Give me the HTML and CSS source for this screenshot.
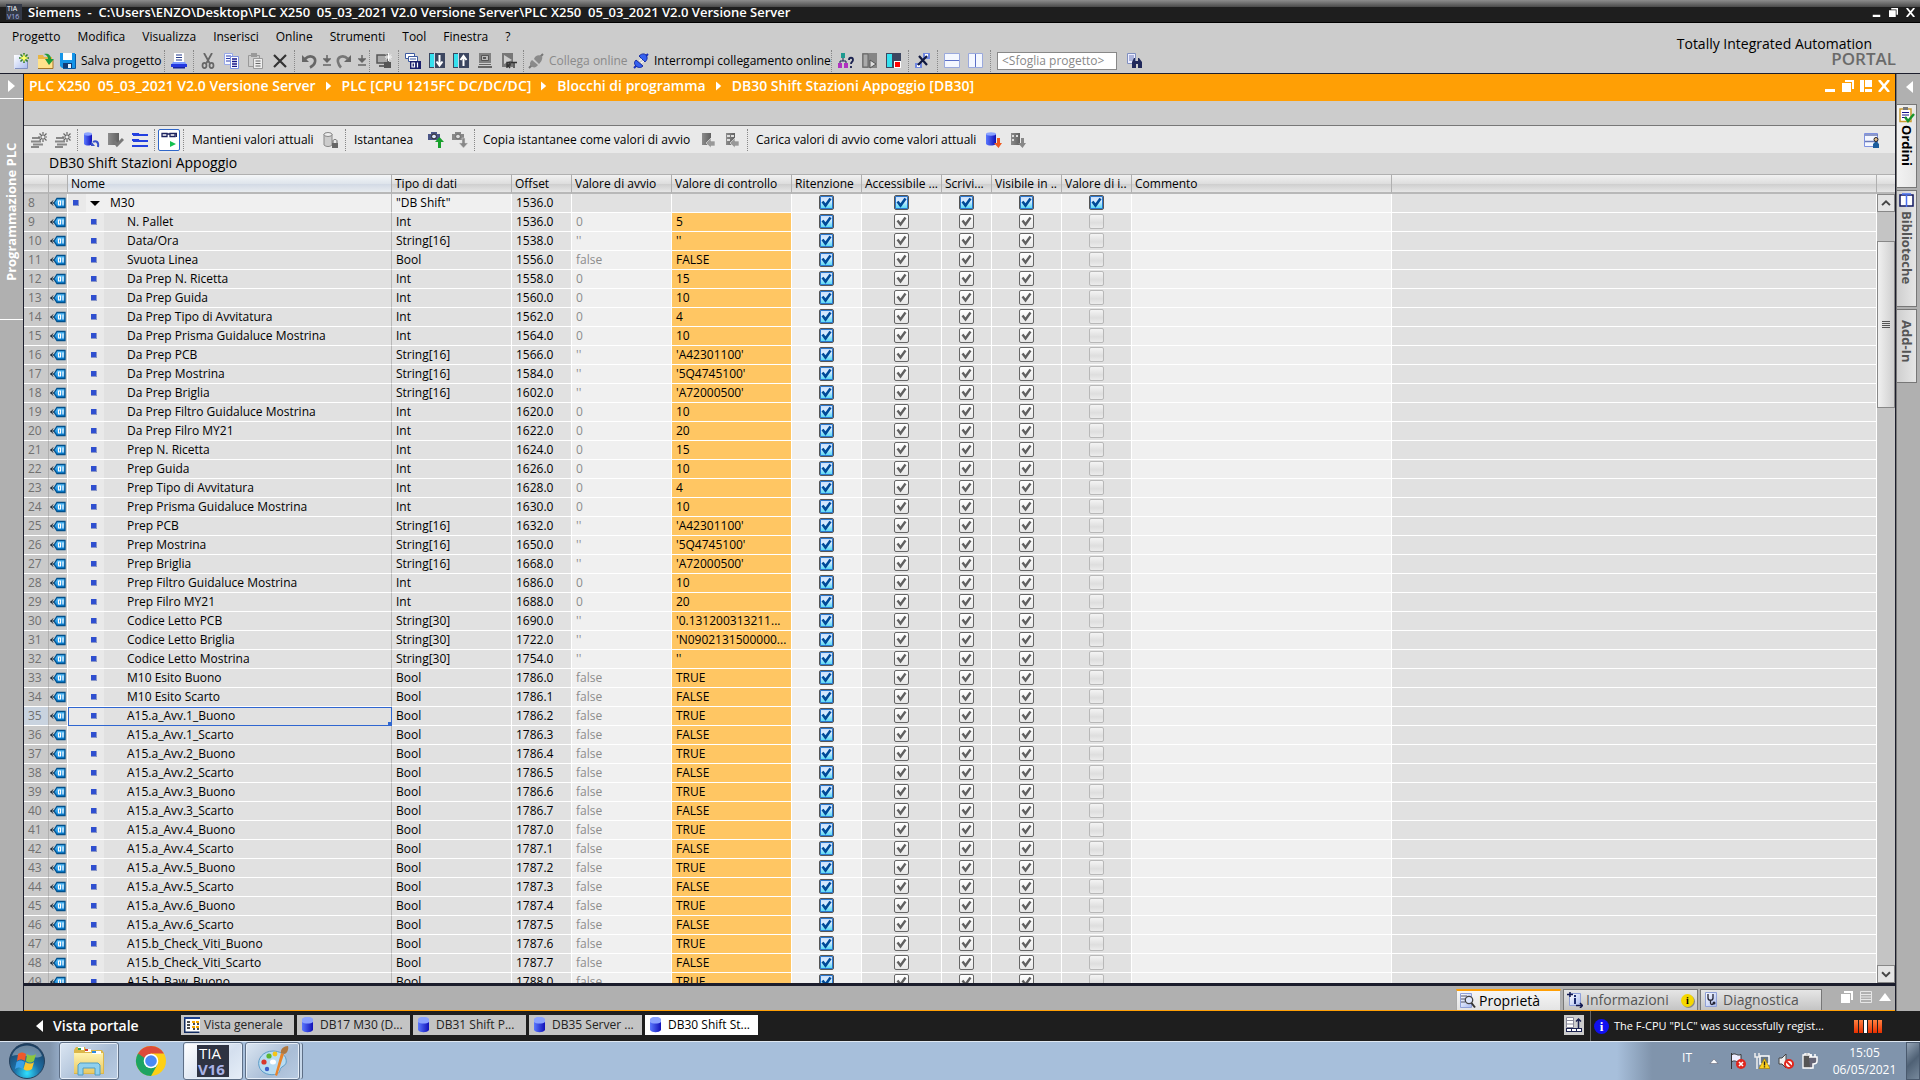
FILE: index.html
```html
<!DOCTYPE html>
<html lang="it">
<head>
<meta charset="utf-8">
<title>Siemens - PLC X250</title>
<link rel="stylesheet" href="styles.css">
</head>
<body>
<svg class="sprite" aria-hidden="true">
  <defs>
    <linearGradient id="gBlue" x1="0" x2="1" y1="0" y2="0"><stop offset="0" stop-color="#5a78ff"/><stop offset="1" stop-color="#1010b8"/></linearGradient>
    <linearGradient id="gGrey" x1="0" x2="1" y1="0" y2="0"><stop offset="0" stop-color="#8c8c8c"/><stop offset="1" stop-color="#606060"/></linearGradient>
    <linearGradient id="gPage" x1="0" x2="1" y1="0" y2="1"><stop offset="0" stop-color="#fff"/><stop offset="1" stop-color="#a9bbf0"/></linearGradient>
    <linearGradient id="gTag" x1="0" x2="0" y1="0" y2="1"><stop offset="0" stop-color="#5cc4ff"/><stop offset="1" stop-color="#0078d0"/></linearGradient>
    <linearGradient id="gFold" x1="0" x2="0" y1="0" y2="1"><stop offset="0" stop-color="#fff3b0"/><stop offset="1" stop-color="#e9c963"/></linearGradient>
    <radialGradient id="gOrb" cx=".5" cy=".85" r=".8"><stop offset="0" stop-color="#2fe0ff"/><stop offset=".45" stop-color="#1d6fa5"/><stop offset="1" stop-color="#1b3f63"/></radialGradient>
  </defs>
  <symbol id="new" viewBox="0 0 16 16"><path d="M0 2h9l4 4v10H0z" fill="url(#gPage)"/><path d="M1 15.5h12.5V7" stroke="#8090c0" fill="none"/><path d="M10 0v10M5 5h10M6.500 1.500l7 7M13.500 1.500l-7 7" stroke="#2d7a2d" stroke-width="1.500"/><path d="M10 1.500v7M6.500 5h7" stroke="#ff5" stroke-width="1.300"/><circle cx="10" cy="5" r="2" fill="#ffff70"/></symbol>
  <symbol id="open" viewBox="0 0 16 16"><path d="M0 2h5l1 2h8v11H0z" fill="#e8b544"/><path d="M0 15V6h15v9z" fill="#ffe28a"/><path d="M0 15.500h15V7" stroke="#a5762a" fill="none"/><path d="M6 1c4-1 7 1 7 5h3l-5 6-4-6h3c0-2-1-4-4-5z" fill="#1f9b3a"/></symbol>
  <symbol id="save" viewBox="0 0 16 16"><path d="M0 0h15v15H2l-2-2z" fill="#1595e8"/><path d="M3 0h9v7H3z" fill="#fff"/><path d="M3 10h9v5H3z" fill="#123c78"/><path d="M8 11h3v4H8z" fill="#e8f4ff"/><path d="M15.500 1v14.500H3" fill="none" stroke="#0a58a0"/></symbol>
  <symbol id="print" viewBox="0 0 16 16"><path d="M3 0h10v9H3z" fill="#fff"/><path d="M5 2h6M5 4.500h6M5 7h6" stroke="#223a8a" stroke-width="1.200"/><path d="M2 9h12l2 3H0z" fill="#7d9bff"/><path d="M0 11h16v3H0z" fill="#2438e0"/><path d="M2 14h12v1.500H2z" fill="#1422a0"/></symbol>
  <symbol id="cut" viewBox="0 0 16 16"><path d="M4 0l5.500 10M12 0L6.500 10" stroke="#666" stroke-width="1.800"/><ellipse cx="4.500" cy="12.500" rx="2" ry="2.600" fill="none" stroke="#666" stroke-width="1.700"/><ellipse cx="11.500" cy="12.500" rx="2" ry="2.600" fill="none" stroke="#666" stroke-width="1.700"/></symbol>
  <symbol id="copy" viewBox="0 0 16 16"><path d="M.5.5h8v11h-8z" fill="#f5f8ff" stroke="#98a8e8"/><path d="M2 3h5M2 5.500h5M2 8h5" stroke="#3040b0"/><path d="M6.500 3.500h8v12h-8z" fill="#fff" stroke="#7f92e0"/><path d="M8 6h5M8 8.500h5M8 11h5M8 13.300h5" stroke="#15158a" stroke-width="1.300"/></symbol>
  <symbol id="paste" viewBox="0 0 16 16"><path d="M.5 2.500h11v11H.5z" fill="#ccc" stroke="#999"/><path d="M3 0h6v4H3z" fill="#999"/><path d="M5.500 5.500h9v10h-9z" fill="#eee" stroke="#999"/><path d="M7.500 8h5M7.500 10.500h5M7.500 13h5" stroke="#666"/></symbol>
  <symbol id="del" viewBox="0 0 16 16"><path d="M2 2l12 12M14 2L2 14" stroke="#333" stroke-width="2.200"/></symbol>
  <symbol id="undo" viewBox="0 0 16 16"><path d="M1 2v7h7z" fill="#666"/><path d="M4 6c5-5 11-2 10 3-.5 2.500-2 4-5 5.500" fill="none" stroke="#666" stroke-width="2.600"/></symbol>
  <symbol id="redo" viewBox="0 0 16 16"><path d="M15 2v7H8z" fill="#666"/><path d="M12 6C7 1 1 4 2 9c.5 2.500 1 3.500 3 5.500" fill="none" stroke="#777" stroke-width="2.600"/></symbol>
  <symbol id="drop" viewBox="0 0 8 16"><path d="M4 2v4M1 6h6L4 9z" stroke="#666" stroke-width="1.500" fill="#666"/><path d="M0 12h8" stroke="#666" stroke-width="1.500"/></symbol>
  <symbol id="screen" viewBox="0 0 16 16"><path d="M1 2h11v8H1z" fill="#aaa" stroke="#555" stroke-width="1.500"/><path d="M8 9h7v6H8z" fill="#555"/><path d="M3 13h5" stroke="#666" stroke-width="2"/><path d="M12.500 0v8M9 4h7M10 1.500l5 5M15 1.500l-5 5" stroke="#fff"/></symbol>
  <symbol id="compile" viewBox="0 0 16 16"><path d="M.5.5h9v5h-9z" fill="#fff" stroke="#3d5aa0"/><path d="M3.500 3.500h9v5h-9z" fill="#fff" stroke="#3d5aa0"/><path d="M5 6h6" stroke="#3d5aa0"/><path d="M5 8h11v8H5z" fill="#1b1f6a"/><path d="M7 10h2.500v4H7zM12.500 9.500v5" fill="none" stroke="#fff" stroke-width="1.200"/></symbol>
  <symbol id="down" viewBox="0 0 16 16"><path d="M0 0h16v15H0z" fill="#3c4660"/><path d="M1 1h4v13H1z" fill="#35e0ee"/><path d="M5.500 0v15" stroke="#c8d8e8"/><path d="M10.500 2v9M7.500 8.500l3 4 3-4" stroke="#fff" stroke-width="2" fill="none"/></symbol>
  <symbol id="up" viewBox="0 0 16 16"><path d="M0 0h16v15H0z" fill="#3c4660"/><path d="M1 1h4v13H1z" fill="#35e0ee"/><path d="M5.500 0v15" stroke="#c8d8e8"/><path d="M10.500 13V4M7.500 7l3-4 3 4" stroke="#fff" stroke-width="2" fill="none"/></symbol>
  <symbol id="sim" viewBox="0 0 16 16"><path d="M2 0h12v10H2z" fill="#808080"/><path d="M4.500 2.500h7v5h-7z" fill="#b8b8b8" stroke="#555"/><path d="M6 4h3v2H6z" fill="#555"/><path d="M2 11h12v1H2zM1 13h14v2H1z" fill="#666"/></symbol>
  <symbol id="rt" viewBox="0 0 16 16"><path d="M1 0h11v14H1z" fill="#777"/><path d="M3 2l8 5-8 4z" fill="#ccc"/><path d="M6 15V9.500h3v2.500H6.500l2.500 3M10 9.500h6M13 9.500V15" stroke="#333" stroke-width="1.400" fill="none"/></symbol>
  <symbol id="plugoff" viewBox="0 0 16 16"><path d="M1 15l3-3M12 4l3-3" stroke="#777" stroke-width="2"/><path d="M4 7l6 5c-2 3-5 3-7 1s-1-4 1-6zM6 6c1-3 4-5 8-3 1 3-1 6-3 8z" fill="#8a8a8a"/></symbol>
  <symbol id="plugon" viewBox="0 0 16 16"><path d="M1 15l3-3M12 4l3-3" stroke="#1830c0" stroke-width="2"/><path d="M3 7l7 6c-2 2-5 2-7 0s-2-4 0-6zM6 3c2-2 5-3 7-1 2 3 1 5-1 7z" fill="#3560f0" stroke="#1228a0"/><path d="M6 8l3-2M8 10l3-2" stroke="#fff"/></symbol>
  <symbol id="diag" viewBox="0 0 16 16"><path d="M3 0h4v5H3z" fill="#1e9a90"/><path d="M5 5v3M2 10V8h6v2" stroke="#1b2250" fill="none"/><path d="M0 10h4v5H0zM6 10h4v5H6z" fill="#b030c0"/><path d="M11 7c0-3 4-3 4 0 0 2-2 1.500-2 4M13 13v2" stroke="#1b2250" stroke-width="1.800" fill="none"/></symbol>
  <symbol id="startcpu" viewBox="0 0 16 16"><path d="M0 0h15v15H0z" fill="#858585"/><path d="M1 1h5v13H1z" fill="#aaa" stroke="#666"/><path d="M8 7l6 4-6 4z" fill="#ddd" stroke="#555"/></symbol>
  <symbol id="stopcpu" viewBox="0 0 16 16"><path d="M0 0h15v15H0z" fill="#3c4660"/><path d="M1 1h5v13H1z" fill="#35e0ee"/><path d="M8 8h7v7H8z" fill="#fff"/><path d="M9 9h5v5H9z" fill="#f00"/></symbol>
  <symbol id="xref" viewBox="0 0 16 16"><path d="M8 0h7v6H8zM0 10h7v5H0z" fill="#7088e0"/><path d="M10 1h3v3h-3zM2 12h3v2H2z" fill="#fff"/><path d="M4 3l8 9M12 3l-9 9" stroke="#101840" stroke-width="2.200"/></symbol>
  <symbol id="splith" viewBox="0 0 16 16"><path d="M.5.5h15v14H.5z" fill="#f4f7ff" stroke="#9aa9dd"/><path d="M1 7.500h14" stroke="#5c70c8"/></symbol>
  <symbol id="splitv" viewBox="0 0 16 16"><path d="M.5.5h14v14H.5z" fill="#f4f7ff" stroke="#9aa9dd"/><path d="M7.500 1v13" stroke="#5c70c8"/></symbol>
  <symbol id="find" viewBox="0 0 16 16"><path d="M.5.5h8v10h-8z" fill="#eef" stroke="#8090c0"/><path d="M2 3h5M2 5h5M2 7h5" stroke="#6a7ab8"/><path d="M5 15V9l2-4h1v3h3V5h1l3 4v6h-4v-4H9v4z" fill="#20285a"/></symbol>
  <symbol id="rowadd" viewBox="0 0 16 16"><path d="M1 6h8M0 9.500h10M2 12.500h10M0 15h8" stroke="#888" stroke-width="2"/><path d="M12 0v10M7 5h9M8.500 1.500l7 7M15.500 1.500l-7 7" stroke="#666" stroke-width="1.200"/><circle cx="12" cy="5" r="1.500" fill="#eee"/></symbol>
  <symbol id="dbundo" viewBox="0 0 16 16"><path d="M0 2v10c2 2 6 2 8 0V2z" fill="url(#gBlue)"/><ellipse cx="4" cy="2" rx="4" ry="1.700" fill="#8ba3ff"/><path d="M7 9v5h4z" fill="#3850c8"/><path d="M9 10c3-2 6 0 5 5" stroke="#3850c8" stroke-width="2" fill="none"/></symbol>
  <symbol id="dbok" viewBox="0 0 16 16"><path d="M0 1h11v12H0z" fill="url(#gGrey)"/><path d="M6 9l3 4 6-6" stroke="#777" stroke-width="3" fill="none"/></symbol>
  <symbol id="expand" viewBox="0 0 16 16"><path d="M0 2h6v1h10M0 8h6v1h10M0 14h16M1 3h4M1 9h4" stroke="#2340e0" stroke-width="2.200" fill="none"/></symbol>
  <symbol id="glasses" viewBox="0 0 16 16"><path d="M1 1.500h5v3H1zM9 1.500h5v3H9zM6 2h3M14 1.500h1.500V5" fill="none" stroke="#1c2260" stroke-width="1.300"/><path d="M9 9l6 3-6 3z" fill="#15c050"/></symbol>
  <symbol id="dblock" viewBox="0 0 16 16"><path d="M1 2v11c2 2 6 2 8 0V2z" fill="#ccc" stroke="#888"/><ellipse cx="5" cy="2.500" rx="4" ry="2" fill="#eee" stroke="#888"/><path d="M10 11V9c0-2 4-2 4 0v2" fill="none" stroke="#666"/><path d="M9 11h6v5H9z" fill="#666"/></symbol>
  <symbol id="camup" viewBox="0 0 16 16"><path d="M0 2h3V0h6v2h3v6H0z" fill="#4a5586"/><circle cx="6" cy="4.500" r="2.400" fill="#dfe6ff" stroke="#222"/><path d="M11.500 5l4.500 5h-3v6h-3v-6H7z" fill="#18a02c"/></symbol>
  <symbol id="camdown" viewBox="0 0 16 16"><path d="M0 2h3V0h6v2h3v6H0z" fill="#888"/><circle cx="6" cy="4.500" r="2.400" fill="#ddd" stroke="#666"/><path d="M10 6h3v5h3l-4.500 5L7 11h3z" fill="#888" stroke="#ddd" stroke-width=".5"/></symbol>
  <symbol id="dbleft" viewBox="0 0 16 16"><path d="M1 1h9v12H1z" fill="url(#gGrey)"/><path d="M5 11l5-5v3l4 0v5h-4v2z" fill="#999" stroke="#eee" stroke-width=".6"/></symbol>
  <symbol id="dbleft2" viewBox="0 0 16 16"><path d="M1 1h9v12H1z" fill="url(#gGrey)"/><path d="M2 3h3v2H2zM2 7h3v2H2zM6 3h3v2H6z" fill="#ddd"/><path d="M5 11l5-5v3l4 0v5h-4v2z" fill="#999" stroke="#eee" stroke-width=".6"/></symbol>
  <symbol id="dbdown" viewBox="0 0 16 16"><path d="M0 2v10c2 2 7 2 10 0V2z" fill="url(#gBlue)"/><ellipse cx="5" cy="2" rx="5" ry="1.700" fill="#8ba3ff"/><path d="M11 6h3v5h2l-3.500 5L8 11h3z" fill="#f05a20"/></symbol>
  <symbol id="dbdown2" viewBox="0 0 16 16"><path d="M1 1h9v12H1z" fill="url(#gGrey)"/><path d="M2 3h2v2H2zM2 7h2v2H2zM6 3h2v2H6z" fill="#ddd"/><path d="M11 6h3v5h2l-3.500 5L8 11h3z" fill="#888"/></symbol>
  <symbol id="layout" viewBox="0 0 16 16"><path d="M.5 1.500h13v13H.5z" fill="#f4f7ff" stroke="#7f92e0"/><path d="M1 3h13M1 9.500h13" stroke="#6a7ab8" stroke-width="1.500"/><circle cx="12" cy="7.500" r="2" fill="#e8c090" stroke="#222"/><path d="M9 16v-4l2-2h2l2 2v4z" fill="#1c5c9c"/></symbol>
  <symbol id="tag" viewBox="0 0 16 12"><path d="M4 6l3-4.500h8v9H7z" fill="url(#gTag)" stroke="#00508c" stroke-width="1.300"/><path d="M0 6h4M3 3.500L1 6l2 2.500" stroke="#123" fill="none"/><path d="M8.500 4h2v4h-2zM13 3.500v5" fill="#1090e0" stroke="#fff" stroke-width="1.200"/></symbol>
  <symbol id="cyl" viewBox="0 0 11 16"><path d="M0 2v11c2 3 9 3 11 0V2z" fill="url(#gBlue)"/><path d="M0 2c2-3 9-3 11 0v3c-2 2-9 2-11 0z" fill="#8ba3ff"/></symbol>
  <symbol id="list" viewBox="0 0 16 16"><path d="M0 0h16v16H0z" fill="#fff"/><path d="M.5.500v15h15" fill="none" stroke="#102a60" stroke-width="2"/><path d="M0 1h16" stroke="#1c3f8c" stroke-width="2"/><path d="M3 5h3M3 8h3M3 11h3M9 7h2M13 7h2M9 12h2M13 12h2" stroke="#111" stroke-width="1.500"/><path d="M8 4h3v2H8zM12 4h3v2h-3zM8 9h3v2H8zM12 9h3v2h-3z" fill="#f8a800"/></symbol>
  <symbol id="clip" viewBox="0 0 16 16"><path d="M1 2h11v12.500H1z" fill="#fff" stroke="#c79a30" stroke-width="1.500"/><path d="M4 0h5v3H4z" fill="#777"/><path d="M3 5.500h7M3 8h7M3 10.500h5" stroke="#15158a" stroke-width="1.200"/><path d="M6 10l3 4 6-7" stroke="#18942c" stroke-width="2.400" fill="none"/></symbol>
  <symbol id="book" viewBox="0 0 16 16"><path d="M1 2h13v11H1z" fill="#fff" stroke="#101860" stroke-width="1.500"/><path d="M3 1h9M7.500 2v12" stroke="#4a70f0" stroke-width="1.500"/></symbol>
  <symbol id="props" viewBox="0 0 16 16"><path d="M.5.500h11v14H.5z" fill="url(#gPage)" stroke="#8fa0d8"/><path d="M1 3h6M1 6h4M1 9h4" stroke="#556"/><circle cx="9" cy="7" r="3.700" fill="#dfe8ff" stroke="#444" stroke-width="1.300"/><path d="M11.500 10l3.500 4.500" stroke="#333" stroke-width="2"/></symbol>
  <symbol id="infotab" viewBox="0 0 16 16"><path d="M2.500 1.500h11v12h-11z" fill="url(#gPage)" stroke="#8fa0d8"/><path d="M0 2.500h6M3 0v5M9 13.500h7M13 11l2.500 2.500L13 16" stroke="#111850" stroke-width="1.500" fill="none"/><path d="M7 3h2v2H7zM7 6h2v6H7z" fill="#1a2a70"/></symbol>
  <symbol id="diagtab" viewBox="0 0 16 16"><path d="M1.500.5h11v14h-11z" fill="url(#gPage)" stroke="#8fa0d8"/><path d="M4 2v4c0 3 5 3 5 0V2M6.500 8v3c0 2 3 2 3 0" stroke="#223" stroke-width="1.300" fill="none"/><circle cx="10" cy="11" r="1.500" fill="#223"/></symbol>
  <symbol id="stack" viewBox="0 0 12 12"><path d="M3 0h9v9h-2V2H3z" fill="currentColor"/><path d="M0 3h9v9H0z" fill="currentColor"/></symbol>
  <symbol id="pane" viewBox="0 0 12 12"><path d="M0 0h4v12H0zM5 0h7v7H5zM5 9h7v3H5z" fill="currentColor"/></symbol>
  <symbol id="min" viewBox="0 0 12 12"><path d="M1 9h10v3H1z" fill="currentColor"/></symbol>
  <symbol id="cross" viewBox="0 0 12 12"><path d="M1 0l10 12M11 0L1 12" stroke="currentColor" stroke-width="2.500"/></symbol>
  <symbol id="rows" viewBox="0 0 12 12"><path d="M.5.5h11v11H.5zM0 3.500h12M0 6h12M0 8.500h12" stroke="#e6e6e6" fill="none"/></symbol>
  <symbol id="right" viewBox="0 0 8 12"><path d="M0 0l7 6-7 6z" fill="currentColor"/></symbol>
  <symbol id="left" viewBox="0 0 8 12"><path d="M8 0L1 6l7 6z" fill="currentColor"/></symbol>
  <symbol id="tri" viewBox="0 0 12 8"><path d="M6 0l6 8H0z" fill="currentColor"/></symbol>
</svg>

<header class="titlebar">
  <svg class="applogo" viewBox="0 0 16 16"><rect width="16" height="16" fill="#333947"/><text x="1" y="7" font-size="7" fill="#fff">TIA</text><text x="1" y="15" font-size="7" fill="#a9b2e6">V16</text></svg>
  <h1>Siemens&nbsp; -&nbsp; C:\Users\ENZO\Desktop\PLC X250&nbsp; 05_03_2021 V2.0 Versione Server\PLC X250&nbsp; 05_03_2021 V2.0 Versione Server</h1>
  <div class="winctl">
    <button aria-label="Riduci"><svg><use href="#min"/></svg></button>
    <button aria-label="Ripristina"><svg><use href="#stack"/></svg></button>
    <button aria-label="Chiudi"><svg><use href="#cross"/></svg></button>
  </div>
</header>

<div class="head">
  <div class="headleft">
    <nav class="menu">
      <a href="#">Progetto</a><a href="#">Modifica</a><a href="#">Visualizza</a><a href="#">Inserisci</a><a href="#">Online</a><a href="#">Strumenti</a><a href="#">Tool</a><a href="#">Finestra</a><a href="#">?</a>
    </nav>
    <div class="toolbar main">
      <div class="group first">
        <button aria-label="Nuovo"><svg><use href="#new"/></svg></button>
        <button aria-label="Apri"><svg><use href="#open"/></svg></button>
        <button class="labelled w-save"><svg><use href="#save"/></svg>Salva progetto</button>
      </div>
      <div class="group"><button aria-label="Stampa"><svg><use href="#print"/></svg></button></div>
      <div class="group">
        <button aria-label="Taglia"><svg><use href="#cut"/></svg></button>
        <button aria-label="Copia"><svg><use href="#copy"/></svg></button>
        <button aria-label="Incolla"><svg><use href="#paste"/></svg></button>
        <button aria-label="Elimina"><svg><use href="#del"/></svg></button>
      </div>
      <div class="group">
        <button aria-label="Annulla"><svg><use href="#undo"/></svg></button>
        <button class="slim" aria-label="Elenco annulla"><svg><use href="#drop"/></svg></button>
        <button aria-label="Ripeti"><svg><use href="#redo"/></svg></button>
        <button class="slim" aria-label="Elenco ripeti"><svg><use href="#drop"/></svg></button>
      </div>
      <div class="group"><button aria-label="Dispositivo"><svg><use href="#screen"/></svg></button></div>
      <div class="group">
        <button aria-label="Compila"><svg><use href="#compile"/></svg></button>
        <button aria-label="Carica nel dispositivo"><svg><use href="#down"/></svg></button>
        <button aria-label="Carica dal dispositivo"><svg><use href="#up"/></svg></button>
        <button aria-label="Simulazione"><svg><use href="#sim"/></svg></button>
        <button aria-label="Runtime"><svg><use href="#rt"/></svg></button>
      </div>
      <div class="group">
        <button class="labelled w-online" disabled><svg><use href="#plugoff"/></svg>Collega online</button>
        <button class="labelled w-offline"><svg><use href="#plugon"/></svg>Interrompi collegamento online</button>
      </div>
      <div class="group">
        <button aria-label="Diagnostica online"><svg><use href="#diag"/></svg></button>
        <button aria-label="Avvia CPU"><svg><use href="#startcpu"/></svg></button>
        <button aria-label="Arresta CPU"><svg><use href="#stopcpu"/></svg></button>
      </div>
      <div class="group"><button aria-label="Riferimenti incrociati"><svg><use href="#xref"/></svg></button></div>
      <div class="group">
        <button aria-label="Dividi in orizzontale"><svg><use href="#splith"/></svg></button>
        <button aria-label="Dividi in verticale"><svg><use href="#splitv"/></svg></button>
      </div>
      <input class="search" type="text" placeholder="&lt;Sfoglia progetto&gt;" aria-label="Sfoglia progetto">
      <button aria-label="Cerca"><svg><use href="#find"/></svg></button>
    </div>
  </div>
  <div class="brand"><span>Totally Integrated Automation</span><strong>PORTAL</strong></div>
</div>

<div class="workspace">
  <aside class="leftbar">
    <button class="opener" aria-label="Espandi"><svg><use href="#right"/></svg></button>
    <div class="leftlabel"><span>Programmazione PLC</span></div>
  </aside>

  <main class="editor">
    <div class="crumbs">
      <a href="#">PLC X250&nbsp; 05_03_2021 V2.0 Versione Server</a><svg><use href="#right"/></svg>
      <a href="#">PLC [CPU 1215FC DC/DC/DC]</a><svg><use href="#right"/></svg>
      <a href="#">Blocchi di programma</a><svg><use href="#right"/></svg>
      <a href="#">DB30 Shift Stazioni Appoggio [DB30]</a>
      <div class="panectl">
        <button aria-label="Riduci"><svg><use href="#min"/></svg></button>
        <button aria-label="Sgancia"><svg><use href="#stack"/></svg></button>
        <button aria-label="Disponi"><svg><use href="#pane"/></svg></button>
        <button aria-label="Chiudi"><svg><use href="#cross"/></svg></button>
      </div>
    </div>
    <div class="spacer"></div>
    <div class="toolbar edit">
      <div class="group">
        <button aria-label="Inserisci riga"><svg><use href="#rowadd"/></svg></button>
        <button aria-label="Aggiungi riga"><svg><use href="#rowadd"/></svg></button>
      </div>
      <div class="group">
        <button aria-label="Resetta valori"><svg><use href="#dbundo"/></svg></button>
        <button aria-label="Aggiorna"><svg><use href="#dbok"/></svg></button>
        <button aria-label="Modo esteso"><svg><use href="#expand"/></svg></button>
      </div>
      <div class="group"><button class="pressed" aria-label="Controlla tutto"><svg><use href="#glasses"/></svg></button></div>
      <div class="group"><button class="caption w-keep">Mantieni valori attuali</button><button aria-label="Blocca"><svg><use href="#dblock"/></svg></button></div>
      <div class="group"><button class="caption w-snap">Istantanea</button><button aria-label="Acquisisci"><svg><use href="#camup"/></svg></button><button aria-label="Ripristina istantanea"><svg><use href="#camdown"/></svg></button></div>
      <div class="group"><button class="caption w-copy">Copia istantanee come valori di avvio</button><button aria-label="Copia tutto"><svg><use href="#dbleft"/></svg></button><button aria-label="Copia parziale"><svg><use href="#dbleft2"/></svg></button></div>
      <div class="group last"><button class="caption w-load">Carica valori di avvio come valori attuali</button><button aria-label="Carica tutto"><svg><use href="#dbdown"/></svg></button><button aria-label="Carica parziale"><svg><use href="#dbdown2"/></svg></button></div>
      <button class="layoutbtn" aria-label="Vista"><svg><use href="#layout"/></svg></button>
    </div>
    <h2>DB30 Shift Stazioni Appoggio</h2>

    <div class="gridwrap">
      <div class="gridview">
        <table>
          <colgroup><col class="c25"><col class="c19"><col class="c324"><col class="c120"><col class="c60"><col class="c100"><col class="c120"><col class="c70"><col class="c80"><col class="c50"><col class="c70"><col class="c70"><col class="c260"><col></colgroup>
          <thead><tr><th></th><th></th><th class="sorted">Nome</th><th>Tipo di dati</th><th>Offset</th><th>Valore di avvio</th><th>Valore di controllo</th><th>Ritenzione</th><th>Accessibile ...</th><th>Scrivi...</th><th>Visibile in ..</th><th>Valore di i..</th><th>Commento</th><th></th></tr></thead>
          <tbody id="rows-body"></tbody>
        </table>
      </div>
      <div class="scroll">
        <div class="scrollhead"></div>
        <button aria-label="Su"><svg viewBox="0 0 16 16"><path d="M3.500 10.500L8 6l4.500 4.500" fill="none" stroke="#444" stroke-width="2.200"/></svg></button>
        <div class="track"><div class="thumb"></div></div>
        <button aria-label="Giù"><svg viewBox="0 0 16 16"><path d="M3.500 6L8 10.500 12.500 6" fill="none" stroke="#444" stroke-width="2.200"/></svg></button>
      </div>
    </div>

    <div class="inspector">
      <button class="tab active w-props"><svg><use href="#props"/></svg>Proprietà</button>
      <button class="tab w-info"><svg><use href="#infotab"/></svg>Informazioni<i class="badge">i</i></button>
      <button class="tab w-diag"><svg><use href="#diagtab"/></svg>Diagnostica</button>
      <div class="inspctl">
        <button aria-label="Sgancia"><svg><use href="#stack"/></svg></button>
        <button aria-label="Elenco"><svg><use href="#rows"/></svg></button>
        <button aria-label="Espandi"><svg class="flat"><use href="#tri"/></svg></button>
      </div>
    </div>
  </main>

  <aside class="rightbar">
    <button class="opener" aria-label="Espandi"><svg><use href="#left"/></svg></button>
    <button class="side on h-ord"><svg><use href="#clip"/></svg><span>Ordini</span></button>
    <button class="side h-bib"><svg><use href="#book"/></svg><span>Biblioteche</span></button>
    <button class="side h-add"><span>Add-In</span></button>
  </aside>
</div>

<div class="portalbar">
  <button class="portal"><svg><use href="#left"/></svg>Vista portale</button>
  <div class="docs">
    <button><svg class="wide"><use href="#list"/></svg>Vista generale</button>
    <button><svg><use href="#cyl"/></svg>DB17 M30 (D...</button>
    <button><svg><use href="#cyl"/></svg>DB31 Shift P...</button>
    <button><svg><use href="#cyl"/></svg>DB35 Server ...</button>
    <button class="on"><svg><use href="#cyl"/></svg>DB30 Shift St...</button>
  </div>
  <div class="status">
    <svg class="stico" viewBox="0 0 20 20"><rect width="20" height="20" fill="#ccc"/><path d="M2.500 2.500h7v10h-7zM3 5.500h6M3 9h6" fill="#fff" stroke="#889"/><path d="M14.500 13V5M12 6.500L14.500 4 17 6.500" stroke="#1b2250" stroke-width="1.500" fill="none"/><path d="M2 13h16v4H2z" fill="#1b2250"/><path d="M3 15h4M8 15h4M13 15h4" stroke="#fff" stroke-width="2"/></svg>
    <div class="msg"><i class="info">i</i><span>The F-CPU "PLC" was successfully regist...</span></div>
    <div class="activity"><b></b><b></b><b class="lit"></b><b></b><b></b><b></b></div>
  </div>
</div>

<footer class="taskbar">
  <button class="start" aria-label="Start"><svg viewBox="0 0 38 38"><circle cx="19" cy="19" r="17.500" fill="url(#gOrb)" stroke="#25405c"/><path d="M4 14c4-14 26-14 30 0-8 5-20-4-30 0z" fill="#fff" opacity=".35"/><path d="M10 12c3-2 5-2 8 0l-1 7c-3-2-5-2-8 0z" fill="#f0592a"/><path d="M19 12c3 2 6 2 9 0l-2 7c-3 2-5 2-8 0z" fill="#8cc63e"/><path d="M8.500 20c3-2 5-2 8 0l-2 7c-3-2-5-2-7.500 0z" fill="#3aa0e8"/><path d="M17.500 20c3 2 6 2 8.500 0l-2 7c-3 2-6 2-8.500 0z" fill="#fcc52c"/></svg></button>
  <button class="task" aria-label="Esplora risorse"><svg viewBox="0 0 32 32"><path d="M1 5l2-3h9l1 3h16l2 3v21H1z" fill="#dcb74a"/><path d="M1 8h29v20H1z" fill="url(#gFold)"/><path d="M5 2h6v3H5z" fill="#fff"/><path d="M5 3h3v2H5z" fill="#2fa84f"/><path d="M12 4h6v3h-6z" fill="#fff"/><path d="M12 4h3v2h-3z" fill="#d83a2b"/><path d="M19 6h9v3h-9z" fill="#fff"/><path d="M19 6h4v2h-4z" fill="#2d8be0"/><path d="M5 30V20l2-2h18l2 2v10h-5v-7H10v7z" fill="#8fd0ee" stroke="#4e9cc4"/></svg></button>
  <button class="task plain" aria-label="Chrome"><svg viewBox="0 0 32 32"><circle cx="16" cy="16" r="15" fill="#fdd016"/><path d="M3 8.500A15 15 0 0 0 16 31l6.500-11.500L16 16z" fill="#1da462"/><path d="M3 8.500A15 15 0 0 1 29 8.500H16L9 16z" fill="#dd4b39"/><path d="M3 8.500L9.500 20l3-5z" fill="#1da462"/><circle cx="16" cy="16" r="7.300" fill="#fff"/><circle cx="16" cy="16" r="5.800" fill="#4a8af4"/></svg></button>
  <button class="task strong" aria-label="TIA Portal"><svg viewBox="0 0 32 32"><rect width="32" height="32" fill="#2e3342"/><text x="2" y="14" font-size="15" fill="#fff" font-weight="500">TIA</text><text x="1" y="30" font-size="15" font-weight="700" fill="#a9b2e6">V16</text></svg></button>
  <button class="task multi" aria-label="Paint"><svg viewBox="0 0 32 32"><path d="M16 6C6 6 0 14 2 21c2 8 12 10 18 8 4-2 2-5 5-7s5-3 4-8-7-8-13-8z" fill="#b8dcf2" stroke="#5c9cc8"/><circle cx="7" cy="17" r="2.600" fill="#d8362a"/><circle cx="12" cy="11" r="2.600" fill="#5cb531"/><circle cx="18" cy="9" r="2.400" fill="#f5c518"/><circle cx="10" cy="24" r="2.200" fill="#3a5cc8"/><ellipse cx="16" cy="17" rx="3" ry="2.500" fill="#fff"/><path d="M27 9L20 31l-2-1 6-22z" fill="#e8832a"/><path d="M24 8c-1-4 3-7 7-7 1 3-1 8-4 8z" fill="#b07840"/></svg></button>
  <div class="tray">
    <span class="lang">IT</span>
    <svg class="flat" viewBox="0 0 12 8"><path d="M2 6.500h8L6 2z" fill="#fff" stroke="#556" stroke-width=".5"/></svg>
    <svg viewBox="0 0 16 16"><path d="M1.500 0v16M2 1.500c4-2 5 2 9 0v7c-4 2-5-2-9 0" fill="#eef" stroke="#333"/><circle cx="11" cy="11" r="5" fill="#e0261c"/><path d="M9 9l4 4M13 9l-4 4" stroke="#fff" stroke-width="1.600"/></svg>
    <svg viewBox="0 0 16 16"><path d="M6 3h9v8H6z" fill="#678" stroke="#fff" stroke-width="1.500"/><path d="M1 0v4h4V0M3 4v12" stroke="#eee" stroke-width="1.500" fill="none"/><path d="M10.500 5.500L16 15.500H5z" fill="#ffd21e" stroke="#a07800" stroke-width=".6"/><path d="M10.500 8.500v4M10.500 13.300v1.200" stroke="#222" stroke-width="1.400"/></svg>
    <svg viewBox="0 0 16 16"><path d="M1 5h3l4-4v14l-4-4H1z" fill="#eee" stroke="#444"/><circle cx="11" cy="11" r="4" fill="#fff" stroke="#e0261c" stroke-width="2"/><path d="M8.500 8.500l5 5" stroke="#e0261c" stroke-width="1.800"/></svg>
    <svg viewBox="0 0 16 16"><path d="M1 2h8v13H1zM3 0h4v2H3z" fill="#555" stroke="#fff" stroke-width="1.300"/><path d="M9 1v3M13 1v3M7 4h8v4c0 3-3 3-4 3v4H8" stroke="#fff" stroke-width="1.500" fill="#667"/></svg>
    <div class="clock"><span>15:05</span><span>06/05/2021</span></div>
    <button class="desk" aria-label="Mostra desktop"></button>
  </div>
</footer>
<script src="rows.js"></script>
</body>
</html>
```
FILE: rows.js
```js
const S16 = 'String[16]', S30 = 'String[30]';
const data = [
  ['N. Pallet', 'Int', '1536.0', '5'], ['Data/Ora', S16, '1538.0', "''"], ['Svuota Linea', 'Bool', '1556.0', 'FALSE'],
  ['Da Prep N. Ricetta', 'Int', '1558.0', '15'], ['Da Prep Guida', 'Int', '1560.0', '10'], ['Da Prep Tipo di Avvitatura', 'Int', '1562.0', '4'],
  ['Da Prep Prisma Guidaluce Mostrina', 'Int', '1564.0', '10'], ['Da Prep PCB', S16, '1566.0', "'A42301100'"],
  ['Da Prep Mostrina', S16, '1584.0', "'5Q4745100'"], ['Da Prep Briglia', S16, '1602.0', "'A72000500'"],
  ['Da Prep Filtro Guidaluce Mostrina', 'Int', '1620.0', '10'], ['Da Prep Filro MY21', 'Int', '1622.0', '20'],
  ['Prep N. Ricetta', 'Int', '1624.0', '15'], ['Prep Guida', 'Int', '1626.0', '10'], ['Prep Tipo di Avvitatura', 'Int', '1628.0', '4'],
  ['Prep Prisma Guidaluce Mostrina', 'Int', '1630.0', '10'], ['Prep PCB', S16, '1632.0', "'A42301100'"],
  ['Prep Mostrina', S16, '1650.0', "'5Q4745100'"], ['Prep Briglia', S16, '1668.0', "'A72000500'"],
  ['Prep Filtro Guidaluce Mostrina', 'Int', '1686.0', '10'], ['Prep Filro MY21', 'Int', '1688.0', '20'],
  ['Codice Letto PCB', S30, '1690.0', "'0.131200313211..."], ['Codice Letto Briglia', S30, '1722.0', "'N0902131500000..."],
  ['Codice Letto Mostrina', S30, '1754.0', "''"], ['M10 Esito Buono', 'Bool', '1786.0', 'TRUE'], ['M10 Esito Scarto', 'Bool', '1786.1', 'FALSE'],
];
const bits = [];
for (let n = 1; n <= 6; n++) bits.push(`A15.a_Avv.${n}_Buono`, `A15.a_Avv.${n}_Scarto`);
bits.push('A15.b_Check_Viti_Buono', 'A15.b_Check_Viti_Scarto', 'A15.b_Baw_Buono');
bits.forEach((name, i) => {
  const bit = i + 2;
  data.push([name, 'Bool', `${1786 + Math.floor(bit / 8)}.${bit % 8}`, i % 2 ? 'FALSE' : 'TRUE']);
});

const start = { Int: '0', Bool: 'false' };
const columns = ['Ritenzione', 'Accessibile', 'Scrivibile', 'Visibile', 'Valore di impostazione'];
const box = (name, col, parent) => {
  const on = parent || col < 4;
  const locked = !parent && col > 0;
  return `<td class="${locked ? '' : 'light'} tick"><input type="checkbox" aria-label="${name} ${columns[col]}"${on ? ' checked' : ''}${locked ? ' disabled' : ''}></td>`;
};
const boxes = (name, parent) => columns.map((_, i) => box(name, i, parent)).join('');
const tag = '<td class="ico"><svg><use href="#tag"/></svg></td>';

let html = `<tr class="parent"><td class="num">8</td>${tag}<td class="name light"><div><span class="indent"><i></i></span><b></b>M30</div></td><td class="light">"DB Shift"</td><td class="off">1536.0</td><td></td><td></td>${boxes('M30', true)}<td class="light"></td><td></td></tr>`;
data.forEach(([name, type, off, val], i) => {
  html += `<tr${i + 9 === 35 ? ' class="selected"' : ''}><td class="num">${i + 9}</td>${tag}<td class="name"><div><span class="indent"><i></i></span>${name}</div></td><td>${type}</td><td class="off">${off}</td><td class="light dim">${start[type] || "''"}</td><td class="live">${val}</td>${boxes(name, false)}<td class="light"></td><td></td></tr>`;
});
document.getElementById('rows-body').innerHTML = html;
```
FILE: styles.css
```css
* { box-sizing: border-box; }
html, body { height: 100%; margin: 0; }
body { display: flex; flex-direction: column; overflow: hidden; background: #ccc; color: #000; font: 12px/18px "Open Sans", "Noto Sans", sans-serif; }
button { border: 0; padding: 0; margin: 0; background: none; font: inherit; color: inherit; display: flex; align-items: center; }
a { color: inherit; text-decoration: none; }
svg { display: block; flex: none; width: 16px; height: 16px; }
.sprite { position: absolute; width: 0; height: 0; }
h1, h2 { margin: 0; white-space: nowrap; }

.titlebar { display: flex; align-items: center; height: 23px; flex: none; padding: 2px 5px 0 6px; background: linear-gradient(#8c8c8c, #4a4a4a 7px, #1e1e1e 7px); border-bottom: 1px solid #000; color: #fff; }
.applogo { margin-right: 6px; }
.titlebar h1 { flex: 1; font-size: 13px; font-weight: 600; }
.winctl { display: flex; gap: 8px; }
.winctl svg { width: 9px; height: 9px; }

.head { display: flex; justify-content: space-between; flex: none; height: 51px; border-bottom: 1px solid #1b1d2c; }
.menu { display: flex; gap: 17px; padding: 5px 12px 4px; }
.toolbar { display: flex; align-items: center; white-space: nowrap; }
.toolbar button { width: 24px; height: 22px; justify-content: center; }
.toolbar .slim { width: 11px; }
.toolbar .slim svg { width: 8px; }
.group { display: flex; align-items: center; padding: 0 2px; height: 22px; border-right: 1px dotted #888; }
.toolbar .labelled { justify-content: flex-start; gap: 5px; padding-left: 2px; }
.toolbar .w-save { width: 104px; }
.toolbar .w-online { width: 105px; color: #8a8a8a; }
.toolbar .w-offline { width: 198px; }
.main .first { padding-left: 10px; }
.search { width: 120px; height: 18px; margin: 0 6px; padding: 0 4px; border: 1px solid #888; background: #fff; font: inherit; }
.search::placeholder { color: #888; opacity: 1; }
.brand { display: flex; flex-direction: column; align-items: flex-end; padding: 11px 24px 0 0; font-size: 14px; font-weight: 500; }
.brand span { padding-right: 24px; line-height: 19px; }
.brand strong { font-size: 17px; font-weight: 600; line-height: 12px; color: #6a6a6a; }

.workspace { display: flex; flex: 1; min-height: 0; }
.leftbar { width: 23px; background: #b0b0b0; color: #fff; }
.opener { width: 100%; height: 25px; justify-content: center; color: #fff; }
.opener svg { width: 8px; height: 12px; }
.leftbar .opener { border-bottom: 1px solid #fff; }
.leftlabel { display: flex; justify-content: center; height: 221px; padding: 46px 2px 0 0; border-bottom: 1px solid #fff; }
.leftlabel span { writing-mode: vertical-rl; transform: rotate(180deg); height: 136px; line-height: 18px; font-size: 13px; font-weight: 700; white-space: nowrap; }

.editor { flex: 1; min-width: 0; display: flex; flex-direction: column; border-left: 1px solid #1b1d2c; border-right: 1px solid #1b1d2c; background: #b0b0b0; }
.crumbs { display: flex; align-items: center; gap: 10px; height: 27px; flex: none; padding: 0 5px 3px; background: #ff9f05; color: #fff; font-size: 14px; font-weight: 600; white-space: nowrap; }
.crumbs > svg { width: 6px; height: 10px; }
.panectl { display: flex; gap: 6px; margin-left: auto; }
.panectl svg { width: 12px; height: 12px; }
.spacer { height: 25px; flex: none; background: #ccc; border-bottom: 1px solid #777; }
.edit { height: 27px; flex: none; padding-left: 1px; background: #e9e9e9; }
.edit .pressed { width: 22px; margin: 0 1px; border: 1px solid #2f66c8; border-radius: 2px; background: #fff; }
.edit .caption { justify-content: flex-start; padding-left: 6px; }
.edit .w-keep { width: 133px; }
.edit .w-snap { width: 76px; }
.edit .w-copy { width: 220px; }
.edit .w-load { width: 232px; }
.edit .last { border-right: 0; }
.layoutbtn { margin: 0 11px 0 auto; }
h2 { height: 21px; flex: none; padding-left: 25px; background: #d8d8d8; font-size: 14px; line-height: 20px; font-weight: 500; }

.gridwrap { flex: 1; min-height: 0; display: flex; border-bottom: 3px solid #1b1d2c; }
.gridview { flex: 1; min-width: 0; overflow: hidden; background: #e1e1e1; }
table { width: 100%; table-layout: fixed; border-collapse: separate; border-spacing: 0; }
.c25 { width: 25px; } .c19 { width: 19px; } .c324 { width: 324px; } .c120 { width: 120px; } .c60 { width: 60px; } .c100 { width: 100px; }
.c70 { width: 70px; } .c80 { width: 80px; } .c50 { width: 50px; } .c260 { width: 260px; }
th, .scrollhead { height: 20px; padding: 0 0 0 3px; text-align: left; font-weight: 400; line-height: 17px; white-space: nowrap; overflow: hidden; border-top: 1px solid #b0b0b0; border-right: 1px solid #b0b0b0; border-bottom: 2px solid #b8b8b8; background: linear-gradient(#f2f2f2, #dedede 50%, #cfcfcf 55%, #e6e6e6); }
th.sorted { background: linear-gradient(#f5f7f9, #dfe5ec 50%, #d3dae5 55%, #e8ecf0); }
td { height: 19px; padding: 0 0 0 4px; line-height: 18px; white-space: nowrap; overflow: hidden; background: #e1e1e1; border-right: 1px solid #fff; border-bottom: 1px solid #fff; }
td.light { background: #f0f0f0; }
td.live { background: #ffc663; }
td.dim { color: #8c8c8c; }
td.num { background: #cacaca; color: #707070; border-right-color: #b0b0b0; }
td.ico { padding: 0 0 0 1px; background: #cacaca; }
td.ico svg { width: 16px; height: 12px; }
td.name { padding: 0; border-right-color: #b8b8b8; }
.name div { display: flex; align-items: center; height: 18px; }
.indent { width: 36px; height: 18px; padding: 6px 0 0 23px; margin-right: 23px; background: #e9e9e9; }
.indent i { display: block; width: 6px; height: 6px; background: #2f4fd0; border-right: 1px solid #8a97c8; border-bottom: 1px solid #8a97c8; }
.parent .indent { width: 18px; padding-left: 5px; margin-right: 4px; }
.parent b { width: 0; margin-right: 10px; border: 5px solid transparent; border-top-color: #000; border-bottom-width: 0; }
.selected .num { background: #c9d3df; }
.selected .name { position: relative; overflow: visible; outline: 1px solid #2f66d0; outline-offset: -1px; }
.selected .name::after { content: ""; position: absolute; right: -1px; bottom: -1px; width: 4px; height: 4px; background: #2f66d0; }
td.tick { padding: 0 0 1px; vertical-align: top; }
.tick input { appearance: none; display: block; width: 15px; height: 15px; margin: 1px auto 0; border: 1px solid #555; border-radius: 2px; background: url("data:image/svg+xml,%3Csvg xmlns='http://www.w3.org/2000/svg' viewBox='0 0 13 13'%3E%3Cpath d='M2.500 5.500l3 4 5-7' fill='none' stroke='%23004a98' stroke-width='2.600'/%3E%3C/svg%3E"), linear-gradient(#c8dcf8, #d8ecff 40%, #48d8f4); box-shadow: inset 0 0 0 1px #2a78d0; }
.tick input:disabled { border-color: #666; box-shadow: none; background: url("data:image/svg+xml,%3Csvg xmlns='http://www.w3.org/2000/svg' viewBox='0 0 13 13'%3E%3Cpath d='M2.500 5.500l3 4 5-7' fill='none' stroke='%23606060' stroke-width='2.400'/%3E%3C/svg%3E"), linear-gradient(#fff, #e6e6e6); }
.tick input:not(:checked) { border-color: #b8b8b8; background: linear-gradient(#f4f4f4, #dedede 60%, #ececec); }

.scroll { width: 18px; flex: none; display: flex; flex-direction: column; background: #c4c4c4; }
.scrollhead { flex: none; padding: 0; border-right: 0; }
.scroll button { width: 18px; height: 18px; flex: none; justify-content: center; border: 1px solid #888; background: #e4e4e4; }
.scroll svg { width: 14px; height: 14px; }
.track { flex: 1; padding-top: 29px; }
.thumb { height: 167px; border: 1px solid #888; background: repeating-linear-gradient(#555 0 1px, transparent 1px 2px) center / 8px 7px no-repeat, linear-gradient(90deg, #f0f0f0, #cfcfcf); }

.inspector { display: flex; align-items: flex-end; justify-content: flex-end; gap: 2px; height: 25px; flex: none; border-bottom: 1px solid #ff9f05; }
.tab { height: 21px; gap: 3px; padding: 0 3px; border: 1px solid #777; border-bottom: 0; background: linear-gradient(#e6e6e6, #c4c4c4); color: #555; font-size: 14px; font-weight: 500; }
.tab.active { background: linear-gradient(#f6f6f6, #e4e4e4); color: #000; border-color: #ff9f05 #aaa; border-top-width: 2px; }
.w-props { width: 105px; } .w-info { width: 135px; } .w-diag { width: 122px; }
.badge { margin-left: auto; width: 13px; height: 13px; border-radius: 7px; background: #f5d800; color: #000; font: 700 10px/13px "Liberation Serif", serif; text-align: center; box-shadow: 1px 1px 0 #888; }
.inspctl { display: flex; align-items: flex-start; gap: 7px; padding: 0 4px 7px 17px; color: #fff; }
.inspctl svg { width: 12px; height: 12px; }
.inspctl .flat { height: 8px; margin-top: 2px; }

.rightbar { width: 24px; flex: none; display: flex; flex-direction: column; gap: 2px; background: #b0b0b0; border-left: 1px solid #777; }
.rightbar .opener { height: 28px; padding-bottom: 3px; }
.side { width: 20px; flex-direction: column; gap: 2px; padding-top: 2px; border: 1px solid #777; border-left: 0; background: linear-gradient(90deg, #cfcfcf, #e6e6e6); color: #555; }
.side.on { background: linear-gradient(90deg, #f2f2f2, #e6e6e6); color: #000; }
.side span { writing-mode: vertical-rl; font-size: 13px; font-weight: 700; line-height: 18px; }
.h-ord { height: 84px; } .h-bib { height: 117px; } .h-add { height: 74px; padding: 10px 0 0; }

.portalbar { display: flex; align-items: center; height: 30px; flex: none; padding-left: 35px; background: #1e1e1e; color: #fff; white-space: nowrap; }
.portal { width: 146px; gap: 10px; font-size: 14px; font-weight: 600; }
.portal svg { width: 8px; height: 12px; }
.docs { display: flex; gap: 3px; padding-bottom: 2px; }
.docs button { width: 113px; height: 20px; gap: 7px; padding-left: 5px; background: #c4c4c4; color: #222; }
.docs .on { background: #fff; color: #000; }
.docs svg { width: 11px; }
.docs .wide { width: 16px; margin: 0 -3px 0 -2px; }
.status { display: flex; align-items: center; margin-left: auto; padding-right: 38px; height: 100%; }
.stico { width: 20px; height: 20px; margin: 0 6px 2px 0; }
.msg { display: flex; align-items: center; gap: 5px; height: 100%; width: 264px; padding-left: 3px; border-left: 1px solid #666; font-size: 11px; }
.info { width: 15px; height: 15px; border-radius: 8px; background: #1010f0; color: #fff; font: 700 13px/15px "Liberation Serif", serif; text-align: center; }
.activity { display: flex; gap: 1px; }
.activity b { width: 4px; height: 13px; background: linear-gradient(#ff8040, #e83000); }
.activity .lit { width: 3px; background: #fff; }

.taskbar { display: flex; align-items: stretch; height: 39px; flex: none; background: #a7bfdb; border-top: 1px solid #dfe8f2; color: #fff; }
.start { width: 59px; padding-left: 8px; background: linear-gradient(90deg, #8195ad 50px, #93a9c4); }
.start svg { width: 38px; height: 38px; }
.task { width: 60px; justify-content: center; margin-right: 2px; border: 1px solid #5e6f86; border-radius: 3px; background: linear-gradient(135deg, #dbe6f2, #a9bdd6 60%, #b8cbe2); box-shadow: inset 0 0 0 1px #e6eef8; }
.task svg { width: 32px; height: 32px; }
.plain { border: 0; background: none; box-shadow: none; }
.strong { background: linear-gradient(135deg, #fff, #d4dfee 60%, #e6eef8); }
.multi { width: 55px; box-shadow: inset 0 0 0 1px #e6eef8, 3px 0 0 -1px #c8d8ea, 4px 0 0 -1px #5e6f86; }
.tray { display: flex; align-items: center; gap: 8px; margin-left: auto; padding-left: 65px; background: linear-gradient(90deg, #a7bfdb, #8094ac 35px); }
.tray svg { width: 16px; height: 16px; }
.tray .flat { width: 12px; height: 8px; margin-right: 2px; }
.lang { margin-right: 8px; padding-bottom: 6px; }
.clock { display: flex; flex-direction: column; align-items: center; width: 71px; padding-left: 6px; font-size: 12px; line-height: 17px; }
.desk { width: 14px; margin-left: 1px; align-self: stretch; border: 1px solid #4a5a6e; background: linear-gradient(135deg, #93a3b5, #4f6175 50%, #77899c); }
```
